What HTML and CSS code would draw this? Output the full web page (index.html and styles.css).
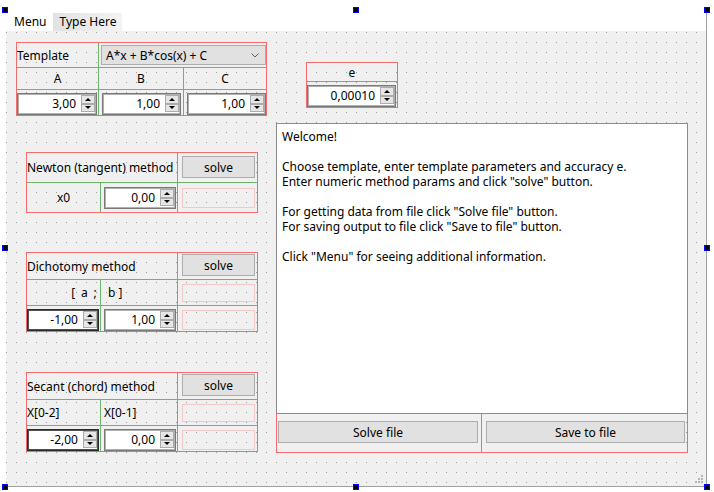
FILE: index.html
```html
<!DOCTYPE html>
<html>
<head>
<meta charset="utf-8">
<link rel="stylesheet" href="styles.css">
</head>
<body>
<div class="window">
  <div class="menubar">
    <span class="menu-item">Menu</span>
    <span class="menu-item type-here">Type Here</span>
  </div>
  <div class="form">
    <div class="col-left">
      <div class="tpl">
        <div class="cell br bb left">Template</div>
        <div class="cell bb span2">
          <div class="combo"><span>A*x + B*cos(x) + C</span>
            <svg class="chev" width="8" height="5" viewBox="0 0 8 5"><polyline points="0.5,0.5 4,4 7.5,0.5" fill="none" stroke="#606060" stroke-width="1"/></svg>
          </div>
        </div>
        <div class="cell br bb center">A</div>
        <div class="cell br bb center">B</div>
        <div class="cell bb center">C</div>
        <div class="cell br"><div class="spin w80 mt3"><span class="v">3,00</span><span class="arrows"><b class="up"></b><b class="dn"></b></span></div></div>
        <div class="cell br"><div class="spin w79 ml3 mt3"><span class="v">1,00</span><span class="arrows"><b class="up"></b><b class="dn"></b></span></div></div>
        <div class="cell"><div class="spin w79 ml3 mt3"><span class="v">1,00</span><span class="arrows"><b class="up"></b><b class="dn"></b></span></div></div>
      </div>

      <div class="method newton">
        <div class="cell br bb span2 left">Newton (tangent) method</div>
        <div class="cell bb"><div class="btn solve">solve</div></div>
        <div class="cell br center">x0</div>
        <div class="cell br"><div class="spin w72 ml3 mt4"><span class="v">0,00</span><span class="arrows"><b class="up"></b><b class="dn"></b></span></div></div>
        <div class="cell"><div class="pink h20 mt5"></div></div>
      </div>

      <div class="method dicho">
        <div class="cell br bb span2 left">Dichotomy method</div>
        <div class="cell bb"><div class="btn solve s2">solve</div></div>
        <div class="cell br bb right spaced">[ a ;</div>
        <div class="cell br bb left pl8">b ]</div>
        <div class="cell bb"><div class="pink h18 mt4"></div></div>
        <div class="cell br"><div class="spin dark w72 mt3"><span class="v">-1,00</span><span class="arrows"><b class="up"></b><b class="dn"></b></span></div></div>
        <div class="cell br"><div class="spin w72 ml3 mt3"><span class="v">1,00</span><span class="arrows"><b class="up"></b><b class="dn"></b></span></div></div>
        <div class="cell"><div class="pink h20 mt4"></div></div>
      </div>

      <div class="method secant">
        <div class="cell br bb span2 left">Secant (chord) method</div>
        <div class="cell bb"><div class="btn solve s2">solve</div></div>
        <div class="cell br bb left">X[0-2]</div>
        <div class="cell br bb left pl3">X[0-1]</div>
        <div class="cell bb"><div class="pink h18 mt4"></div></div>
        <div class="cell br"><div class="spin dark w72 mt3"><span class="v">-2,00</span><span class="arrows"><b class="up"></b><b class="dn"></b></span></div></div>
        <div class="cell br"><div class="spin w72 ml3 mt3"><span class="v">0,00</span><span class="arrows"><b class="up"></b><b class="dn"></b></span></div></div>
        <div class="cell"><div class="pink h20 mt4"></div></div>
      </div>
    </div>

    <div class="col-right">
      <div class="ebox">
        <div class="cell bb center">e</div>
        <div class="cell"><div class="spin w89 mt3"><span class="v">0,00010</span><span class="arrows"><b class="up"></b><b class="dn"></b></span></div></div>
      </div>
      <div class="main">
        <div class="textedit">
          <div class="ln">Welcome!</div>
          <div class="ln"></div>
          <div class="ln">Choose template, enter template parameters and accuracy e.</div>
          <div class="ln">Enter numeric method params and click "solve" button.</div>
          <div class="ln"></div>
          <div class="ln">For getting data from file click "Solve file" button.</div>
          <div class="ln">For saving output to file click "Save to file" button.</div>
          <div class="ln"></div>
          <div class="ln">Click "Menu" for seeing additional information.</div>
        </div>
        <div class="btnrow">
          <div class="cell br"><div class="btn fbtn b1">Solve file</div></div>
          <div class="cell"><div class="btn fbtn b2">Save to file</div></div>
        </div>
      </div>
    </div>
  </div>
</div>

<div class="grip">
  <i style="left:6px;top:0"></i>
  <i style="left:3px;top:3px"></i><i style="left:6px;top:3px"></i>
  <i style="left:0;top:6px"></i><i style="left:3px;top:6px"></i><i style="left:6px;top:6px"></i>
</div>

<span class="handle h-tl"></span>
<span class="handle h-tm"></span>
<span class="handle h-tr"></span>
<span class="handle h-ml"></span>
<span class="handle h-mr"></span>
<span class="handle h-bl"></span>
<span class="handle h-bm"></span>
<span class="handle h-br"></span>
</body>
</html>
```

FILE: styles.css
```css
* { box-sizing: border-box; }

body {
  margin: 0;
  width: 714px;
  height: 492px;
  overflow: hidden;
  position: relative;
  background: #ffffff;
  font-family: "Noto Sans", sans-serif;
  font-size: 12px;
  color: #000;
}

.window {
  margin: 10px 0 0 5px;
  width: 702px;
  height: 477px;
  border-right: 1px solid #a0a0a0;
  border-bottom: 1px solid #a0a0a0;
  display: flex;
  flex-direction: column;
}

.menubar {
  height: 21px;
  display: flex;
  align-items: flex-start;
  padding-left: 9px;
}

.menu-item {
  margin-top: 3px;
  height: 18px;
  line-height: 17px;
}

.type-here {
  margin-left: 7px;
  padding: 0 6px;
  background: linear-gradient(90deg, #e2e2e2, #f3f3f3);
}

.form {
  flex: 1;
  margin-left: 1px;
  background-color: #f0f0f0;
  background-image: conic-gradient(at 1px 1px, transparent 75%, #9e9e9e 0);
  background-size: 10px 10px;
  background-position: 0 1px;
  display: flex;
  align-items: flex-start;
}

.col-left {
  margin: 11px 0 0 10px;
  width: 251px;
  display: flex;
  flex-direction: column;
}

.col-right {
  margin: 31px 0 0 9px;
  display: flex;
  flex-direction: column;
}

/* layout grids */
.tpl {
  width: 251px;
  height: 74px;
  border: 1px solid #f36b6b;
  display: grid;
  grid-template-columns: 82px 85px 82px;
  grid-template-rows: 25px 22px 25px;
}

.method {
  width: 232px;
  margin-left: 10px;
  border: 1px solid #f36b6b;
  display: grid;
  grid-template-columns: 74px 77px 79px;
}

.newton { margin-top: 36px; height: 61px; grid-template-rows: 30px 29px; }
.dicho  { margin-top: 39px; height: 80px; grid-template-rows: 27px 26px 25px; }
.secant { margin-top: 40px; height: 80px; grid-template-rows: 27px 26px 25px; }

.ebox {
  margin-left: 30px;
  width: 92px;
  height: 46px;
  border: 1px solid #f36b6b;
  display: grid;
  grid-template-rows: 19px 25px;
}

.cell { min-width: 0; }
.br { border-right: 1px solid #6db46d; }
.bb { border-bottom: 1px solid #6db46d; }
.span2 { grid-column: span 2; }

.left, .center, .right {
  display: flex;
  align-items: center;
  white-space: nowrap;
}
.center { justify-content: center; }
.right { justify-content: flex-end; padding-right: 2px; }
.spaced { letter-spacing: 1.3px; }
.pl8 { padding-left: 7px; }
.pl3 { padding-left: 3px; }

/* combo */
.combo {
  margin: 2px 0 0 2px;
  width: 165px;
  height: 20px;
  background: #e1e1e1;
  border: 1px solid #adadad;
  display: flex;
  align-items: center;
  justify-content: space-between;
  padding: 0 6px 0 4px;
}
.chev { display: block; }

/* spin boxes */
.spin {
  display: flex;
  height: 22px;
  background: #fff;
  border: 1px solid #7a7a7a;
  box-shadow: inset 0 0 0 1px #b0b0b0;
  padding: 1px 1px 2px 0;
}
.spin.dark {
  border-color: #2a2a2a;
  box-shadow: inset 0 0 0 1px #505050;
}
.spin .v {
  flex: 1;
  text-align: right;
  padding-right: 5px;
  line-height: 18px;
  white-space: nowrap;
}
.arrows {
  width: 14px;
  display: flex;
  flex-direction: column;
}
.arrows b {
  flex: 1;
  background: #e6e6e6;
  border: 1px solid #acacac;
  display: flex;
  align-items: center;
  justify-content: center;
}
.arrows .up::after {
  content: "";
  border-left: 3px solid transparent;
  border-right: 3px solid transparent;
  border-bottom: 3px solid #000;
}
.arrows .dn::after {
  content: "";
  border-left: 3px solid transparent;
  border-right: 3px solid transparent;
  border-top: 3px solid #000;
}

.w72 { width: 72px; }
.w79 { width: 79px; }
.w80 { width: 80px; }
.w89 { width: 89px; }
.ml3 { margin-left: 3px; }
.mt3 { margin-top: 3px; }
.mt4 { margin-top: 4px; }
.mt5 { margin-top: 5px; }

/* buttons */
.btn {
  background: #e1e1e1;
  border: 1px solid #adadad;
  display: flex;
  align-items: center;
  justify-content: center;
  height: 22px;
  white-space: nowrap;
}
.solve { margin: 3px 0 0 4px; width: 73px; }
.solve.s2 { margin-top: 1px; }

.pink {
  margin-left: 4px;
  width: 73px;
  border: 1px solid #f5c8c8;
}
.h18 { height: 18px; }
.h20 { height: 20px; }

/* main text area */
.main {
  margin-top: 15px;
  width: 412px;
  height: 330px;
  border: 1px solid #f36b6b;
  display: flex;
  flex-direction: column;
}
.textedit {
  margin: -1px -1px 0 -1px;
  height: 291px;
  background: #fff;
  border: 1px solid #8c8c8c;
  padding: 5px 0 0 5px;
  white-space: nowrap;
}
.ln {
  height: 15px;
  line-height: 15px;
}
.btnrow {
  flex: 1;
  display: grid;
  grid-template-columns: 205px 205px;
}
.fbtn { margin-top: 7px; }
.b1 { margin-left: 1px; width: 200px; }
.b2 { margin-left: 4px; width: 199px; }

/* resize grip */
.grip {
  position: absolute;
  left: 695px;
  top: 475px;
  width: 8px;
  height: 8px;
}
.grip i {
  position: absolute;
  width: 2px;
  height: 2px;
  background: #b4b4b4;
}

/* selection handles */
.handle {
  position: absolute;
  width: 6px;
  height: 6px;
  background: #000;
  border: 1px solid #0000ff;
}
.h-tl { left: 2px; top: 7px; }
.h-tm { left: 353px; top: 7px; }
.h-tr { left: 704px; top: 7px; }
.h-ml { left: 2px; top: 245px; }
.h-mr { left: 704px; top: 245px; }
.h-bl { left: 2px; top: 484px; }
.h-bm { left: 353px; top: 484px; }
.h-br { left: 704px; top: 484px; }
```
